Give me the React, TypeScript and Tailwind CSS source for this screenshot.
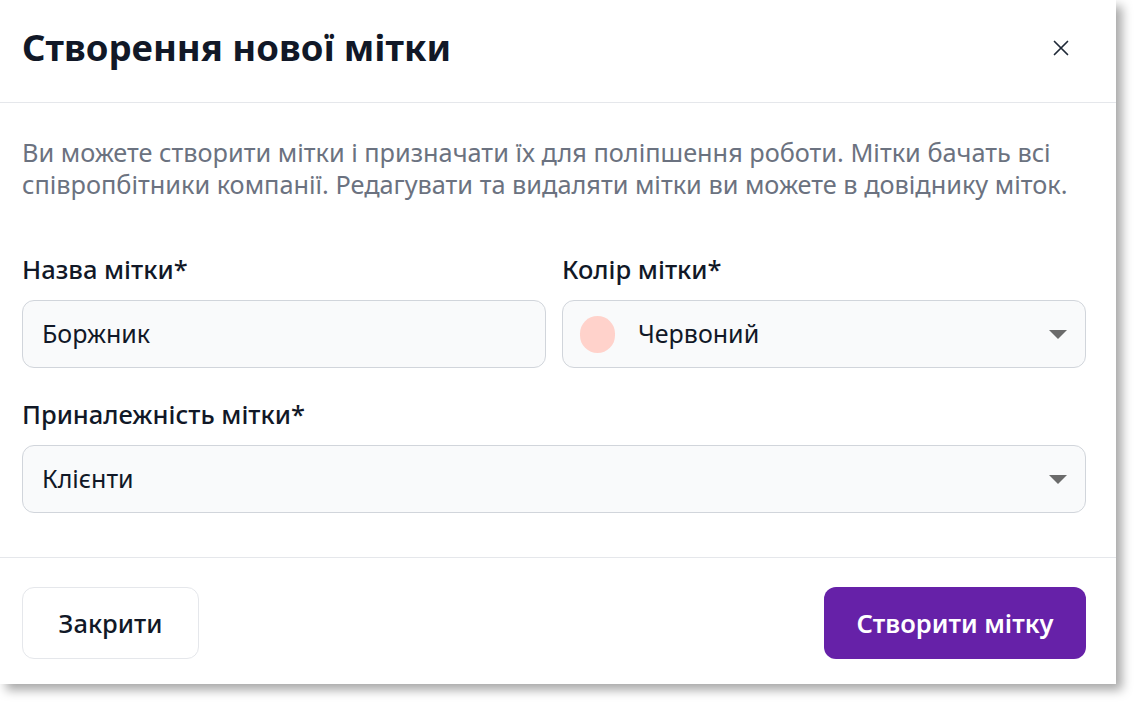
import React from "react";

function Caret() {
  return (
    <svg width="18" height="9" viewBox="0 0 18 9" className="shrink-0">
      <path d="M0 0 H18 L9 9 Z" fill="#6b6b6b" />
    </svg>
  );
}

export default function App() {
  return (
    <div className="w-[1136px] h-[704px] bg-white" style={{ fontFamily: '"Noto Sans", "Open Sans", sans-serif' }}>
      <div className="w-[1116px] h-[684px] bg-white flex flex-col shadow-[6px_6px_10px_rgba(0,0,0,0.35)]">
        <div className="h-[103px] border-b border-[#e5e7eb] flex items-center justify-between pl-[22px] pr-[46px]">
          <h1 className="text-[36.5px] font-bold text-[#111827] leading-none mt-[-8px]">Створення нової мітки</h1>
          <svg width="18" height="18" viewBox="0 0 18 18" className="mt-[-6px]">
            <path d="M2.5 2.5 L15.5 15.5 M15.5 2.5 L2.5 15.5" stroke="#1f2937" strokeWidth="1.7" strokeLinecap="round" />
          </svg>
        </div>
        <div className="pl-[22px] pr-[30px] pt-[33px] pb-[44px] border-b border-[#e5e7eb]">
          <p className="text-[25.3px] leading-[32px] text-[#6b7280]">
            Ви можете створити мітки і призначати їх для поліпшення роботи. Мітки бачать всі співропбітники компанії. Редагувати та видаляти мітки ви можете в довіднику міток.
          </p>
          <div className="grid grid-cols-2 gap-4 mt-[55px]">
            <div className="flex flex-col">
              <label className="text-[25.5px] leading-[28px] font-medium text-[#111827] mb-[17px]">Назва мітки*</label>
              <div className="h-[68px] rounded-[12px] border border-[#d1d5db] bg-[#f9fafb] flex items-center px-[19px] text-[25px] text-[#111827]">
                Боржник
              </div>
            </div>
            <div className="flex flex-col">
              <label className="text-[25.5px] leading-[28px] font-medium text-[#111827] mb-[17px]">Колір мітки*</label>
              <div className="h-[68px] rounded-[12px] border border-[#d1d5db] bg-[#f9fafb] flex items-center pl-[17px] pr-[18px] text-[25px] text-[#111827]">
                <span className="w-[35px] h-[37px] rounded-full bg-[#ffd2cb] shrink-0" />
                <span className="ml-[23px] flex-1">Червоний</span>
                <Caret />
              </div>
            </div>
          </div>
          <div className="flex flex-col mt-[32px]">
            <label className="text-[25.5px] leading-[28px] font-medium text-[#111827] mb-[17px]">Приналежність мітки*</label>
            <div className="h-[68px] rounded-[12px] border border-[#d1d5db] bg-[#f9fafb] flex items-center pl-[19px] pr-[18px] text-[25px] text-[#111827]">
              <span className="flex-1">Клієнти</span>
              <Caret />
            </div>
          </div>
        </div>
        <div className="flex justify-between items-start pl-[22px] pr-[30px] pt-[29px]">
          <button className="h-[72px] w-[177px] rounded-[12px] border border-[#e5e7eb] bg-white text-[25.5px] font-medium text-[#111827]">
            Закрити
          </button>
          <button className="h-[72px] w-[262px] rounded-[12px] bg-[#6621a8] text-[25.5px] font-semibold text-white">
            Створити мітку
          </button>
        </div>
      </div>
    </div>
  );
}
